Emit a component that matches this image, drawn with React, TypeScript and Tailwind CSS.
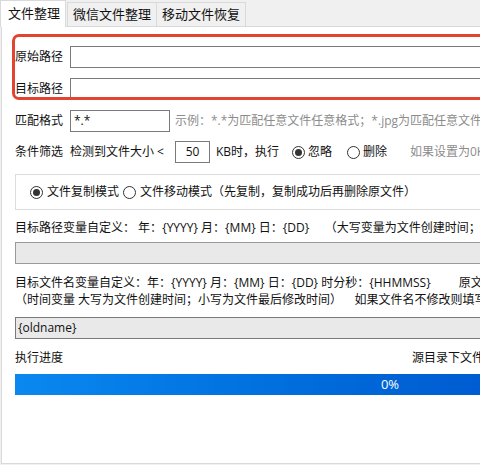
import React from "react";

function Radio({ checked }: { checked?: boolean }) {
  return (
    <span className="w-[13px] h-[13px] rounded-full border border-[#333333] bg-white flex items-center justify-center shrink-0">
      {checked && <span className="w-[7px] h-[7px] rounded-full bg-[#333333]" />}
    </span>
  );
}

export default function App() {
  return (
    <div className="w-[480px] h-[465px] overflow-hidden bg-[#f0f0f0] text-[12px] text-[#111111] leading-none font-[family-name:'Microsoft_YaHei','Open_Sans','Noto_Sans_CJK_SC',sans-serif]">
      {/* tab strip */}
      <div className="flex items-end h-[26px]">
        <div className="relative z-10 -mb-px h-[27px] w-[66px] bg-white border border-b-0 border-[#d9d9d9] flex items-center pl-[7px] pb-[1px] text-[13px]">
          文件整理
        </div>
        <div className="h-[24px] ml-px px-[5px] border border-b-0 border-[#d9d9d9] flex items-center text-[13px]">
          微信文件整理
        </div>
        <div className="h-[24px] px-[5px] border border-l-0 border-b-0 border-[#d9d9d9] flex items-center text-[13px]">
          移动文件恢复
        </div>
      </div>

      {/* page body */}
      <div className="w-[1200px] h-[438px] ml-px bg-white border border-[#d9d9d9] flex flex-col">
        {/* path box */}
        <div className="ml-[10px] mt-[7px] w-[1000px] h-[66px] border-[3px] border-[#e3442f] rounded-[7px] overflow-hidden flex flex-col pt-[9px]">
          <div className="flex items-center h-[22px]">
            <span className="w-[55px]">原始路径</span>
            <div className="flex-1 h-[22px] border border-[#7a7a7a] bg-white" />
          </div>
          <div className="flex items-center h-[22px] mt-[10px]">
            <span className="w-[55px]">目标路径</span>
            <div className="flex-1 h-[22px] border border-[#7a7a7a] bg-white" />
          </div>
        </div>

        {/* match pattern */}
        <div className="flex items-center h-[22px] mt-[10px] ml-[13px]">
          <span className="w-[55px]">匹配格式</span>
          <div className="w-[100px] h-[22px] border border-[#7a7a7a] flex items-center pl-[3px]">*.*</div>
          <span className="ml-[5px] text-[#8c8c8c] whitespace-pre">示例：*.*为匹配任意文件任意格式；*.jpg为匹配任意文件任意jpg格式</span>
        </div>

        {/* size filter */}
        <div className="flex items-center h-[22px] mt-[9px] ml-[13px] whitespace-pre">
          <span className="w-[55px]">条件筛选</span>
          <span className="w-[105px]">检测到文件大小 &lt;</span>
          <div className="w-[35px] h-[22px] border border-[#7a7a7a] flex items-center justify-center">50</div>
          <span className="ml-[6px] w-[76px]">KB时，执行</span>
          <Radio checked />
          <span className="ml-[3px] w-[39px]">忽略</span>
          <Radio />
          <span className="ml-[3px] w-[47px]">删除</span>
          <span className="text-[#8c8c8c]">如果设置为0KB则不进行筛选</span>
        </div>

        {/* copy / move mode */}
        <div className="ml-[13px] mt-[11px] w-[900px] h-[36px] border border-[#dcdcdc] flex items-center pl-[14px] whitespace-pre">
          <Radio checked />
          <span className="ml-[4px] w-[76px]">文件复制模式</span>
          <Radio />
          <span className="ml-[4px]">文件移动模式（先复制，复制成功后再删除原文件）</span>
        </div>

        {/* target path variables */}
        <div className="ml-[13px] mt-[10px] h-[16px] flex items-center whitespace-pre">
          目标路径变量自定义： 年：{"{YYYY}"} 月：{"{MM}"} 日：{"{DD}"}{"     "}（大写变量为文件创建时间；小写为文件最后修改时间）
        </div>
        <div className="ml-[13px] mt-[6px] w-[900px] h-[22px] border border-[#9a9a9a] bg-[#e9e9e9]" />

        {/* target file name variables */}
        <div className="ml-[13px] mt-[11px] h-[16px] flex items-center whitespace-pre">
          目标文件名变量自定义：年：{"{YYYY}"} 月：{"{MM}"} 日：{"{DD}"} 时分秒：{"{HHMMSS}"}{"         "}原文件名：{"{oldname}"}
        </div>
        <div className="ml-[13px] mt-px h-[16px] flex items-center whitespace-pre">
          （时间变量 大写为文件创建时间；小写为文件最后修改时间）{"    "}如果文件名不修改则填写{"{oldname}"}
        </div>
        <div className="ml-[13px] mt-[9px] w-[900px] h-[22px] border border-[#7a7a7a] bg-[#e9e9e9] flex items-center pl-[2px]">
          {"{oldname}"}
        </div>

        {/* progress */}
        <div className="ml-[13px] mt-[11px] h-[16px] flex items-center whitespace-pre">
          <span className="w-[397px]">执行进度</span>
          <span>源目录下文件总数：0</span>
        </div>
        <div className="ml-[13px] mt-[8px] w-[750px] h-[21px] bg-gradient-to-r from-[#0b88f0] via-[#0064d6] to-[#0040c4] flex items-center justify-center text-white text-[13px]">
          0%
        </div>
      </div>
    </div>
  );
}
